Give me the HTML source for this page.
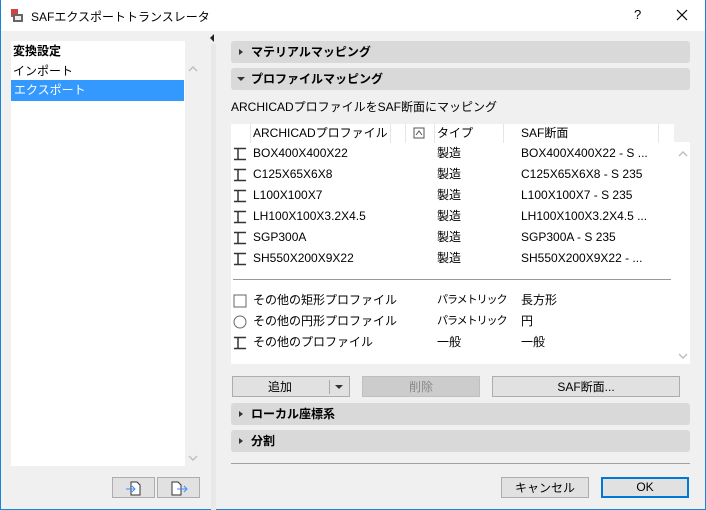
<!DOCTYPE html>
<html><head><meta charset="utf-8"><style>
*{margin:0;padding:0;box-sizing:border-box}
body{width:706px;height:510px;position:relative;overflow:hidden;background:#f0f0f0;font-family:"Liberation Sans","Noto Sans CJK JP",sans-serif;font-size:12px;color:#000}
.a{position:absolute}
.hdr{position:absolute;left:231px;width:459px;height:22px;background:#d9d9d9;border-radius:3px;font-weight:bold;font-size:12px;line-height:22px;padding-left:20px}
.tri{position:absolute;left:8px;top:8px;width:0;height:0;border-top:3px solid transparent;border-bottom:3px solid transparent;border-left:4px solid #333}
.trd{position:absolute;left:6px;top:9px;width:0;height:0;border-left:4px solid transparent;border-right:4px solid transparent;border-top:4px solid #333}
.row{position:absolute;left:231px;width:440px;height:21px;line-height:21px;font-size:12px}
.row span{position:absolute}
.pm{font-size:11px;letter-spacing:-1px}
.btn{position:absolute;height:22px;border:1px solid #adadad;background:#e1e1e1;text-align:center;line-height:20px;font-size:12px}
.sep{position:absolute;top:0;width:1px;height:19px;background:#e5e5e5}
</style></head><body>
<div class="a" style="left:0;top:0;width:706px;height:510px;border:1px solid #1883d7;border-top:none"></div>
<div class="a" style="left:1px;top:0;width:704px;height:31px;background:#fff"></div>
<svg class="a" style="left:9px;top:8px" width="16" height="16"><rect x="2" y="1" width="7" height="8" fill="#c44" /><rect x="4" y="6" width="10" height="8" fill="#666"/><rect x="6" y="8" width="6" height="4" fill="#eee"/></svg>
<div class="a" style="left:31px;top:8px;font-size:12px">SAFエクスポートトランスレータ</div>
<div class="a" style="left:634px;top:7px;font-size:13px">?</div>
<svg class="a" style="left:676px;top:9px" width="12" height="12"><path d="M1 1L11 11M11 1L1 11" stroke="#000" stroke-width="1.2"/></svg>

<svg width="0" height="0" style="position:absolute"><defs>
<symbol id="ib" viewBox="0 0 14 14"><path d="M1 1.5h12M1 12.5h12M5 1.5v11" stroke="#333" stroke-width="1.5" fill="none"/></symbol>
<symbol id="up" viewBox="0 0 10 6"><path d="M1 5l4-4 4 4" stroke="#c0c0c0" stroke-width="1.5" fill="none"/></symbol>
<symbol id="dn" viewBox="0 0 10 6"><path d="M1 1l4 4 4-4" stroke="#c0c0c0" stroke-width="1.5" fill="none"/></symbol>
</defs></svg>

<div class="a" style="left:11px;top:41px;width:174px;height:425px;background:#fff"></div>
<div class="a" style="left:13px;top:42px;font-weight:bold">変換設定</div>
<div class="a" style="left:13px;top:62px">インポート</div>
<div class="a" style="left:11px;top:80px;width:173px;height:21px;background:#3399ff;color:#fff;padding-left:3px;line-height:20px">エクスポート</div>
<svg class="a" style="left:188px;top:66px" width="10" height="6"><use href="#up"/></svg>
<svg class="a" style="left:188px;top:455px" width="10" height="6"><use href="#dn"/></svg>
<div class="a" style="left:210px;top:34px;width:0;height:0;border-top:4px solid transparent;border-bottom:4px solid transparent;border-right:4px solid #222"></div>
<div class="a" style="left:211px;top:44px;width:5px;height:466px;background:#e8e8e8"></div>
<div class="btn" style="left:112px;top:477px;width:43px;height:21px"><svg width="20" height="18" style="margin-top:1px"><path d="M7 3h6l3 3v10H7z" fill="#fff" stroke="#333"/><path d="M2 10h9M8 7l3 3-3 3" stroke="#3b8cff" fill="none"/></svg></div>
<div class="btn" style="left:157px;top:477px;width:43px;height:21px"><svg width="20" height="18" style="margin-top:1px"><path d="M3 3h6l3 3v10H3z" fill="#fff" stroke="#333"/><path d="M8 10h10M15 7l3 3-3 3" stroke="#3b8cff" fill="none"/></svg></div>

<div class="hdr" style="top:41px"><div class="tri"></div>マテリアルマッピング</div>
<div class="hdr" style="top:68px"><div class="trd"></div>プロファイルマッピング</div>
<div class="a" style="left:231px;top:98px">ARCHICADプロファイルをSAF断面にマッピング</div>

<div class="a" style="left:231px;top:124px;width:443px;height:240px;background:#fff"></div>
<div class="a" style="left:674px;top:142px;width:16px;height:222px;background:#fff"></div>
<svg class="a" style="left:678px;top:151px" width="10" height="6"><use href="#up"/></svg>
<svg class="a" style="left:678px;top:353px" width="10" height="6"><use href="#dn"/></svg>
<div class="a" style="left:231px;top:124px;width:459px;height:19px;font-size:12px;line-height:19px">
<span class="sep" style="left:19px"></span>
<span class="a" style="left:22px">ARCHICADプロファイル</span>
<span class="sep" style="left:159px"></span>
<span class="sep" style="left:174px"></span>
<svg class="a" style="left:182px;top:3px" width="12" height="12"><path d="M1 1h10v10H1z M3 8l3-4 3 4" fill="none" stroke="#555"/></svg>
<span class="sep" style="left:203px"></span>
<span class="a" style="left:206px">タイプ</span>
<span class="sep" style="left:272px"></span>
<span class="a" style="left:290px">SAF断面</span>
<span class="sep" style="left:427px"></span>
</div>

<div class="row" style="top:143px"><svg class="a" style="left:2px;top:4px" width="14" height="14"><use href="#ib"/></svg><span style="left:22px">BOX400X400X22</span><span style="left:206px">製造</span><span style="left:290px">BOX400X400X22 - S ...</span></div>
<div class="row" style="top:164px"><svg class="a" style="left:2px;top:4px" width="14" height="14"><use href="#ib"/></svg><span style="left:22px">C125X65X6X8</span><span style="left:206px">製造</span><span style="left:290px">C125X65X6X8 - S 235</span></div>
<div class="row" style="top:185px"><svg class="a" style="left:2px;top:4px" width="14" height="14"><use href="#ib"/></svg><span style="left:22px">L100X100X7</span><span style="left:206px">製造</span><span style="left:290px">L100X100X7 - S 235</span></div>
<div class="row" style="top:206px"><svg class="a" style="left:2px;top:4px" width="14" height="14"><use href="#ib"/></svg><span style="left:22px">LH100X100X3.2X4.5</span><span style="left:206px">製造</span><span style="left:290px">LH100X100X3.2X4.5 ...</span></div>
<div class="row" style="top:227px"><svg class="a" style="left:2px;top:4px" width="14" height="14"><use href="#ib"/></svg><span style="left:22px">SGP300A</span><span style="left:206px">製造</span><span style="left:290px">SGP300A - S 235</span></div>
<div class="row" style="top:248px"><svg class="a" style="left:2px;top:4px" width="14" height="14"><use href="#ib"/></svg><span style="left:22px">SH550X200X9X22</span><span style="left:206px">製造</span><span style="left:290px">SH550X200X9X22 - ...</span></div>
<div class="a" style="left:233px;top:279px;width:438px;height:1px;background:#999"></div>
<div class="row" style="top:290px"><svg class="a" style="left:2px;top:4px" width="14" height="14"><rect x="1" y="1" width="12" height="12" fill="none" stroke="#666"/></svg><span style="left:22px">その他の矩形プロファイル</span><span class="pm" style="left:206px">パラメトリック</span><span style="left:290px">長方形</span></div>
<div class="row" style="top:311px"><svg class="a" style="left:2px;top:4px" width="14" height="14"><circle cx="7" cy="7" r="6" fill="none" stroke="#666"/></svg><span style="left:22px">その他の円形プロファイル</span><span class="pm" style="left:206px">パラメトリック</span><span style="left:290px">円</span></div>
<div class="row" style="top:332px"><svg class="a" style="left:2px;top:4px" width="14" height="14"><use href="#ib"/></svg><span style="left:22px">その他のプロファイル</span><span style="left:206px">一般</span><span style="left:290px">一般</span></div>

<div class="btn" style="left:232px;top:376px;width:118px;height:21px;padding-right:22px">追加<span class="a" style="left:96px;top:3px;width:1px;height:14px;background:#aaa"></span><span class="a" style="left:102px;top:8px;border-left:4px solid transparent;border-right:4px solid transparent;border-top:4px solid #333"></span></div>
<div class="btn" style="left:362px;top:376px;width:118px;height:21px;background:#ccc;border-color:#bfbfbf;color:#888">削除</div>
<div class="btn" style="left:492px;top:376px;width:188px;height:21px">SAF断面...</div>

<div class="hdr" style="top:403px"><div class="tri"></div>ローカル座標系</div>
<div class="hdr" style="top:430px"><div class="tri"></div>分割</div>
<div class="a" style="left:231px;top:463px;width:459px;height:1px;background:#a0a0a0"></div>
<div class="btn" style="left:501px;top:477px;width:88px;height:21px">キャンセル</div>
<div class="btn" style="left:601px;top:477px;width:88px;height:21px;border:2px solid #0078d7;line-height:17px">OK</div>
</body></html>
